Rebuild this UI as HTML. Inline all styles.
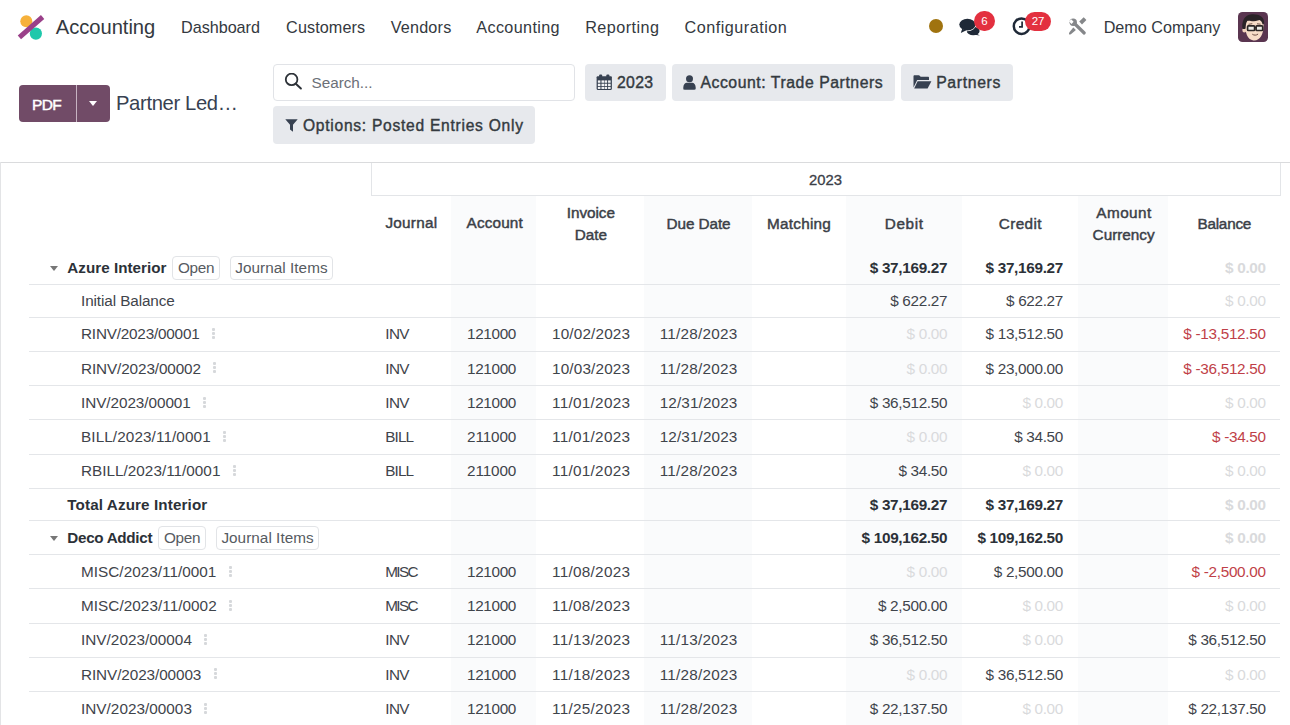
<!DOCTYPE html>
<html><head><meta charset="utf-8"><title>Partner Ledger</title>
<style>
html,body{margin:0;padding:0;background:#fff;}
body{width:1290px;height:725px;overflow:hidden;position:relative;font-family:'Liberation Sans', sans-serif;}
.t{position:absolute;white-space:nowrap;}
.r{position:absolute;}
.bl{display:inline-block;width:0;height:0;vertical-align:baseline;}
</style></head><body>
<svg class="r" style="left:14px;top:12px" width="34" height="32" viewBox="0 0 34 32">
<circle cx="12.3" cy="9.3" r="6" fill="#f6b13b"/>
<circle cx="21.9" cy="21.6" r="6.1" fill="#1ec8ab"/>
<line x1="5.4" y1="25.3" x2="28.6" y2="5" stroke="#9a4089" stroke-width="5" stroke-linecap="butt"/>
</svg>
<div class="t" style="top:16.81px;font-size:20.2px;line-height:20.2px;font-weight:400;color:#343940;letter-spacing:-0.049px;left:55.80px;">Accounting</div>
<div class="t" style="top:18.91px;font-size:16.2px;line-height:16.2px;font-weight:400;color:#343940;letter-spacing:-0.031px;left:181.00px;">Dashboard</div>
<div class="t" style="top:18.91px;font-size:16.2px;line-height:16.2px;font-weight:400;color:#343940;letter-spacing:0.098px;left:286.10px;">Customers</div>
<div class="t" style="top:18.91px;font-size:16.2px;line-height:16.2px;font-weight:400;color:#343940;letter-spacing:0.193px;left:390.70px;">Vendors</div>
<div class="t" style="top:18.91px;font-size:16.2px;line-height:16.2px;font-weight:400;color:#343940;letter-spacing:0.350px;left:476.30px;">Accounting</div>
<div class="t" style="top:18.91px;font-size:16.2px;line-height:16.2px;font-weight:400;color:#343940;letter-spacing:0.445px;left:585.20px;">Reporting</div>
<div class="t" style="top:18.91px;font-size:16.2px;line-height:16.2px;font-weight:400;color:#343940;letter-spacing:0.487px;left:684.60px;">Configuration</div>
<div class="r" style="left:929px;top:19.3px;width:14px;height:14px;border-radius:50%;background:#a0730f;"></div>
<svg class="r" style="left:958px;top:17px" width="24" height="20" viewBox="0 0 24 20">
<ellipse cx="15.2" cy="14" rx="6.4" ry="4.3" fill="#1f2937"/>
<path d="M18.5 16.5L21.8 18.6L16.5 17.8Z" fill="#1f2937"/>
<ellipse cx="9.4" cy="7.6" rx="8.1" ry="5.9" fill="#1f2937" stroke="#fff" stroke-width="1.3" paint-order="stroke"/>
<path d="M4.2 11.8L2.8 15.9L8.4 13.2Z" fill="#1f2937"/>
</svg>
<div class="r" style="left:974.2px;top:11.3px;width:20.4px;height:19.8px;border-radius:10px;background:#e3303f;"></div>
<div class="t" style="top:16.30px;font-size:11.5px;line-height:11.5px;font-weight:400;color:#fff;left:684.40px;width:600px;text-align:center;">6</div>
<svg class="r" style="left:1012px;top:16px" width="20" height="21" viewBox="0 0 20 21">
<circle cx="9.6" cy="10.2" r="7.8" fill="none" stroke="#1f2937" stroke-width="2.5"/>
<path d="M10.1 5.6V10.8H7" fill="none" stroke="#1f2937" stroke-width="1.7"/>
</svg>
<div class="r" style="left:1025.2px;top:11.5px;width:25.8px;height:19.5px;border-radius:10px;background:#e3303f;"></div>
<div class="t" style="top:16.30px;font-size:11.5px;line-height:11.5px;font-weight:400;color:#fff;left:738.10px;width:600px;text-align:center;">27</div>
<svg class="r" style="left:1064px;top:13px" width="28" height="26" viewBox="0 0 28 26">
<g fill="#85878a">
<path d="M15.2 8.6l4.5-4.4 2.7 2.7-4.4 4.5z"/>
<path d="M9.3 14.4L11.9 17L7.2 20.9Q5.6 22 5.1 21.3Q4.7 20.6 5.6 19.1Z"/>
</g>
<line x1="11" y1="11" x2="20.2" y2="20" stroke="#85878a" stroke-width="3.2" stroke-linecap="round"/>
<circle cx="9.2" cy="9.2" r="3.7" fill="#85878a"/>
<rect x="5.8" y="6.9" width="3" height="3.5" transform="rotate(-45 7.3 8.65)" fill="#fff"/>
</svg>
<div class="t" style="top:19.21px;font-size:16.2px;line-height:16.2px;font-weight:400;color:#343940;letter-spacing:-0.022px;left:1103.70px;">Demo Company</div>
<svg class="r" style="left:1238px;top:12px" width="30" height="30" viewBox="0 0 30 30">
<rect width="30" height="30" rx="4.5" fill="#5a3550"/>
<path d="M7.5 12C7 20 9 27.5 15.5 28.5 22 29 25.5 22 25.6 14 25.7 9 22 7 16.5 7 11 7 8 8.5 7.5 12z" fill="#f7dcc8"/>
<ellipse cx="6.3" cy="18" rx="2" ry="2.6" fill="#f3d2bd"/>
<path d="M4.5 17C3.5 9.5 6 2.6 14 2.2 21 1.8 26.5 4.5 26.2 11.5L24.6 12.5C24 10 23 8.6 21.5 8 17.5 9.5 12 9.6 9.5 8.6 8.2 10.5 7.6 13.5 7.3 17z" fill="#2a2327"/>
<rect x="9.6" y="13.9" width="7" height="4.6" rx="0.8" fill="#ecebe6" stroke="#2c2626" stroke-width="1.7"/>
<rect x="18.1" y="13.9" width="6.6" height="4.6" rx="0.8" fill="#ecebe6" stroke="#2c2626" stroke-width="1.7"/>
<path d="M16.6 15.5h1.5" stroke="#2c2626" stroke-width="1.2"/>
<path d="M14.3 22.2c1.8 1.3 4 1.3 5.8-.2" stroke="#6b4a40" stroke-width="1" fill="none"/>
<path d="M10.5 12.3l3.8-.6M19 11.8l3.6.4" stroke="#5b4238" stroke-width="0.9"/>
</svg>
<div class="r" style="left:19px;top:84.5px;width:56.5px;height:37px;background:#714b67;border-radius:4px 0 0 4px;"></div>
<div class="r" style="left:75.5px;top:84.5px;width:1px;height:37px;background:#c7b3c2;"></div>
<div class="r" style="left:76.5px;top:84.5px;width:33.5px;height:37px;background:#714b67;border-radius:0 4px 4px 0;"></div>
<div class="t" style="top:96.60px;font-size:15.5px;line-height:15.5px;font-weight:400;color:#fff;letter-spacing:-0.650px;-webkit-text-stroke:0.45px #fff;left:32.00px;">PDF</div>
<div class="r" style="left:89px;top:101px;width:0;height:0;border-left:4.5px solid transparent;border-right:4.5px solid transparent;border-top:5px solid #fff;"></div>
<div class="t" style="top:93.01px;font-size:20.2px;line-height:20.2px;font-weight:400;color:#374151;letter-spacing:-0.341px;left:116.00px;">Partner Led…</div>
<div class="r" style="left:273.3px;top:64.3px;width:301.6px;height:36.8px;border:1px solid #e1e3e7;border-radius:4px;box-sizing:border-box;background:#fff;"></div>
<svg class="r" style="left:284px;top:73px" width="20" height="19" viewBox="0 0 20 19">
<circle cx="7.6" cy="6.4" r="5.8" fill="none" stroke="#2d3238" stroke-width="1.8"/>
<path d="M11.8 10.8l5.1 4.7" stroke="#2d3238" stroke-width="2" stroke-linecap="round"/>
</svg>
<div class="t" style="top:75.31px;font-size:15.3px;line-height:15.3px;font-weight:400;color:#6c7077;letter-spacing:-0.028px;left:311.50px;">Search...</div>
<div class="r" style="left:584.8px;top:64.3px;width:81px;height:36.3px;background:#e7e9ed;border-radius:4px;"></div>
<div class="r" style="left:671.5px;top:64.3px;width:223.7px;height:36.3px;background:#e7e9ed;border-radius:4px;"></div>
<div class="r" style="left:900.5px;top:64.3px;width:112.5px;height:36.3px;background:#e7e9ed;border-radius:4px;"></div>
<div class="r" style="left:273.3px;top:106.1px;width:261.7px;height:37.6px;background:#e7e9ed;border-radius:4px;"></div>
<svg class="r" style="left:596px;top:74px" width="16.5" height="16.5" viewBox="0 0 16 16">
<rect x="0.6" y="2.2" width="14.8" height="13.2" rx="1" fill="#374151"/>
<rect x="3" y="0.5" width="3" height="4" rx="1" fill="#374151"/>
<rect x="10" y="0.5" width="3" height="4" rx="1" fill="#374151"/>
<g fill="#f3f4f6">
<rect x="1.8" y="6.2" width="2.5" height="2.3"/><rect x="5.3" y="6.2" width="2.5" height="2.3"/><rect x="8.3" y="6.2" width="2.5" height="2.3"/><rect x="11.7" y="6.2" width="2.5" height="2.3"/>
<rect x="1.8" y="9.4" width="2.5" height="2.3"/><rect x="5.3" y="9.4" width="2.5" height="2.3"/><rect x="8.3" y="9.4" width="2.5" height="2.3"/><rect x="11.7" y="9.4" width="2.5" height="2.3"/>
<rect x="1.8" y="12.5" width="2.5" height="2"/><rect x="5.3" y="12.5" width="2.5" height="2"/><rect x="8.3" y="12.5" width="2.5" height="2"/><rect x="11.7" y="12.5" width="2.5" height="2"/>
</g></svg>
<div class="t" style="top:74.91px;font-size:15.8px;line-height:15.8px;font-weight:400;color:#343a40;letter-spacing:0.285px;-webkit-text-stroke:0.4px #343a40;left:617.00px;">2023</div>
<svg class="r" style="left:683px;top:74.5px" width="13" height="15" viewBox="0 0 13 15">
<circle cx="6.5" cy="3.8" r="3.5" fill="#374151"/>
<path d="M0.3 12.5c0-3.2 1.8-4.8 3.5-4.8h5.4c1.7 0 3.5 1.6 3.5 4.8v1c0 .8-.6 1.2-1.2 1.2H1.5c-.6 0-1.2-.4-1.2-1.2z" fill="#374151"/>
</svg>
<div class="t" style="top:74.91px;font-size:15.8px;line-height:15.8px;font-weight:400;color:#343a40;letter-spacing:0.543px;-webkit-text-stroke:0.4px #343a40;left:700.40px;">Account: Trade Partners</div>
<svg class="r" style="left:912.5px;top:74.5px" width="19" height="14" viewBox="0 0 19 14">
<path d="M0.5 1.2C0.5 .6 1 .2 1.5 .2h4.6l1.6 1.6h7.3c.6 0 1 .4 1 1V5H4.2L0.5 12.5z" fill="#374151"/>
<path d="M4.6 6.2h13.8L14.6 13.5H1.2z" fill="#374151"/>
</svg>
<div class="t" style="top:74.91px;font-size:15.8px;line-height:15.8px;font-weight:400;color:#343a40;letter-spacing:0.642px;-webkit-text-stroke:0.4px #343a40;left:936.20px;">Partners</div>
<svg class="r" style="left:285.3px;top:119px" width="13" height="13" viewBox="0 0 13 13">
<path d="M0.3 0.3h12.4L8 5.8v7L5 10.6V5.8z" fill="#374151"/>
</svg>
<div class="t" style="top:117.50px;font-size:15.6px;line-height:15.6px;font-weight:400;color:#343a40;letter-spacing:0.730px;-webkit-text-stroke:0.4px #343a40;left:303.00px;">Options: Posted Entries Only</div>
<div class="r" style="left:451px;top:196px;width:85px;height:529px;background:#fafbfc;"></div>
<div class="r" style="left:644px;top:196px;width:108px;height:529px;background:#fafbfc;"></div>
<div class="r" style="left:846px;top:196px;width:116px;height:529px;background:#fafbfc;"></div>
<div class="r" style="left:1078px;top:196px;width:90px;height:529px;background:#fafbfc;"></div>
<div class="r" style="left:0px;top:162px;width:1290px;height:1px;background:#dadbdd;"></div>
<div class="r" style="left:0px;top:162px;width:1px;height:563px;background:#e3e4e6;"></div>
<div class="r" style="left:371px;top:163px;width:910px;height:32.5px;border:1px solid #e3e5e8;border-top:none;box-sizing:border-box;background:#fff;"></div>
<div class="t" style="top:173.10px;font-size:14.8px;line-height:14.8px;font-weight:400;color:#3b4047;letter-spacing:-0.007px;-webkit-text-stroke:0.3px #3b4047;left:525.50px;width:600px;text-align:center;">2023</div>
<div class="t" style="top:215.41px;font-size:15.3px;line-height:15.3px;font-weight:400;color:#3b4047;letter-spacing:0.271px;-webkit-text-stroke:0.45px #3b4047;left:385.40px;">Journal</div>
<div class="t" style="top:215.41px;font-size:15.3px;line-height:15.3px;font-weight:400;color:#3b4047;letter-spacing:0.153px;-webkit-text-stroke:0.45px #3b4047;left:466.60px;">Account</div>
<div class="t" style="top:204.81px;font-size:15.3px;line-height:15.3px;font-weight:400;color:#3b4047;letter-spacing:-0.062px;-webkit-text-stroke:0.45px #3b4047;left:290.87px;width:600px;text-align:center;">Invoice</div>
<div class="t" style="top:227.21px;font-size:15.3px;line-height:15.3px;font-weight:400;color:#3b4047;letter-spacing:-0.005px;-webkit-text-stroke:0.45px #3b4047;left:290.90px;width:600px;text-align:center;">Date</div>
<div class="t" style="top:216.01px;font-size:15.3px;line-height:15.3px;font-weight:400;color:#3b4047;letter-spacing:-0.090px;-webkit-text-stroke:0.45px #3b4047;left:398.55px;width:600px;text-align:center;">Due Date</div>
<div class="t" style="top:216.01px;font-size:15.3px;line-height:15.3px;font-weight:400;color:#3b4047;letter-spacing:0.246px;-webkit-text-stroke:0.45px #3b4047;left:767.00px;">Matching</div>
<div class="t" style="top:215.60px;font-size:15.3px;line-height:15.3px;font-weight:400;color:#3b4047;letter-spacing:0.646px;-webkit-text-stroke:0.45px #3b4047;left:604.22px;width:600px;text-align:center;">Debit</div>
<div class="t" style="top:215.60px;font-size:15.3px;line-height:15.3px;font-weight:400;color:#3b4047;letter-spacing:0.378px;-webkit-text-stroke:0.45px #3b4047;left:720.39px;width:600px;text-align:center;">Credit</div>
<div class="t" style="top:204.51px;font-size:15.3px;line-height:15.3px;font-weight:400;color:#3b4047;letter-spacing:0.475px;-webkit-text-stroke:0.45px #3b4047;left:824.04px;width:600px;text-align:center;">Amount</div>
<div class="t" style="top:227.41px;font-size:15.3px;line-height:15.3px;font-weight:400;color:#3b4047;letter-spacing:-0.009px;-webkit-text-stroke:0.45px #3b4047;left:823.60px;width:600px;text-align:center;">Currency</div>
<div class="t" style="top:216.10px;font-size:15.3px;line-height:15.3px;font-weight:400;color:#3b4047;letter-spacing:-0.215px;-webkit-text-stroke:0.45px #3b4047;left:924.29px;width:600px;text-align:center;">Balance</div>
<div class="r" style="left:29px;top:283.8px;width:1251px;height:1px;background:#e4e6e9;"></div>
<div class="r" style="left:50.3px;top:265.8px;width:0;height:0;border-left:4.6px solid transparent;border-right:4.6px solid transparent;border-top:5.2px solid #777;"></div>
<div class="t" style="top:259.86px;font-size:15.2px;line-height:15.2px;font-weight:700;color:#2c3138;letter-spacing:0.030px;left:67.30px;">Azure Interior</div>
<div class="r" style="left:172.3px;top:255.6px;width:47.7px;height:24px;border:1px solid #e2e4e7;border-radius:4px;box-sizing:border-box;"></div>
<div class="t" style="top:259.96px;font-size:15.3px;line-height:15.3px;font-weight:400;color:#565b61;letter-spacing:-0.308px;left:177.90px;">Open</div>
<div class="r" style="left:229.8px;top:255.6px;width:103.1px;height:24px;border:1px solid #e2e4e7;border-radius:4px;box-sizing:border-box;"></div>
<div class="t" style="top:259.96px;font-size:15.3px;line-height:15.3px;font-weight:400;color:#565b61;letter-spacing:0.039px;left:235.30px;">Journal Items</div>
<div class="t" style="top:259.85px;font-size:15.3px;line-height:15.3px;font-weight:700;color:#2c3138;letter-spacing:-0.307px;right:342.81px;text-align:right;">$ 37,169.27</div>
<div class="t" style="top:259.85px;font-size:15.3px;line-height:15.3px;font-weight:700;color:#2c3138;letter-spacing:-0.307px;right:227.01px;text-align:right;">$ 37,169.27</div>
<div class="t" style="top:259.85px;font-size:15.3px;line-height:15.3px;font-weight:700;color:#d9dadc;letter-spacing:-0.323px;right:24.32px;text-align:right;">$ 0.00</div>
<div class="r" style="left:29px;top:316.8px;width:1251px;height:1px;background:#e4e6e9;"></div>
<div class="t" style="top:293.01px;font-size:15.3px;line-height:15.3px;font-weight:400;color:#3f444b;letter-spacing:-0.104px;left:81.00px;">Initial Balance</div>
<div class="t" style="top:293.01px;font-size:15.3px;line-height:15.3px;font-weight:400;color:#3f444b;letter-spacing:-0.323px;right:342.82px;text-align:right;">$ 622.27</div>
<div class="t" style="top:293.01px;font-size:15.3px;line-height:15.3px;font-weight:400;color:#3f444b;letter-spacing:-0.323px;right:227.02px;text-align:right;">$ 622.27</div>
<div class="t" style="top:293.01px;font-size:15.3px;line-height:15.3px;font-weight:400;color:#d9dadc;letter-spacing:-0.323px;right:24.32px;text-align:right;">$ 0.00</div>
<div class="r" style="left:29px;top:350.7px;width:1251px;height:1px;background:#e4e6e9;"></div>
<div class="t" style="top:326.46px;font-size:15.3px;line-height:15.3px;font-weight:400;color:#3f444b;letter-spacing:-0.209px;left:81.00px;">RINV/2023/00001</div>
<div class="r" style="left:212px;top:328px;width:3.4px;height:3.4px;border-radius:1px;background:#d6d8db;"></div>
<div class="r" style="left:212px;top:332px;width:3.4px;height:3.4px;border-radius:1px;background:#d6d8db;"></div>
<div class="r" style="left:212px;top:336px;width:3.4px;height:3.4px;border-radius:1px;background:#d6d8db;"></div>
<div class="t" style="top:326.46px;font-size:15.3px;line-height:15.3px;font-weight:400;color:#3f444b;letter-spacing:-0.653px;left:385.30px;">INV</div>
<div class="t" style="top:326.46px;font-size:15.3px;line-height:15.3px;font-weight:400;color:#3f444b;letter-spacing:-0.350px;left:467.00px;">121000</div>
<div class="t" style="top:326.46px;font-size:15.3px;line-height:15.3px;font-weight:400;color:#3f444b;letter-spacing:0.159px;left:291.08px;width:600px;text-align:center;">10/02/2023</div>
<div class="t" style="top:326.46px;font-size:15.3px;line-height:15.3px;font-weight:400;color:#3f444b;letter-spacing:0.252px;left:398.63px;width:600px;text-align:center;">11/28/2023</div>
<div class="t" style="top:326.46px;font-size:15.3px;line-height:15.3px;font-weight:400;color:#d9dadc;letter-spacing:-0.323px;right:342.82px;text-align:right;">$ 0.00</div>
<div class="t" style="top:326.46px;font-size:15.3px;line-height:15.3px;font-weight:400;color:#3f444b;letter-spacing:-0.307px;right:227.01px;text-align:right;">$ 13,512.50</div>
<div class="t" style="top:326.46px;font-size:15.3px;line-height:15.3px;font-weight:400;color:#bf3f48;letter-spacing:-0.297px;right:24.30px;text-align:right;">$ -13,512.50</div>
<div class="r" style="left:29px;top:384.9px;width:1251px;height:1px;background:#e4e6e9;"></div>
<div class="t" style="top:360.51px;font-size:15.3px;line-height:15.3px;font-weight:400;color:#3f444b;letter-spacing:-0.116px;left:81.00px;">RINV/2023/00002</div>
<div class="r" style="left:213px;top:362px;width:3.4px;height:3.4px;border-radius:1px;background:#d6d8db;"></div>
<div class="r" style="left:213px;top:366px;width:3.4px;height:3.4px;border-radius:1px;background:#d6d8db;"></div>
<div class="r" style="left:213px;top:370px;width:3.4px;height:3.4px;border-radius:1px;background:#d6d8db;"></div>
<div class="t" style="top:360.51px;font-size:15.3px;line-height:15.3px;font-weight:400;color:#3f444b;letter-spacing:-0.653px;left:385.30px;">INV</div>
<div class="t" style="top:360.51px;font-size:15.3px;line-height:15.3px;font-weight:400;color:#3f444b;letter-spacing:-0.350px;left:467.00px;">121000</div>
<div class="t" style="top:360.51px;font-size:15.3px;line-height:15.3px;font-weight:400;color:#3f444b;letter-spacing:0.159px;left:291.08px;width:600px;text-align:center;">10/03/2023</div>
<div class="t" style="top:360.51px;font-size:15.3px;line-height:15.3px;font-weight:400;color:#3f444b;letter-spacing:0.252px;left:398.63px;width:600px;text-align:center;">11/28/2023</div>
<div class="t" style="top:360.51px;font-size:15.3px;line-height:15.3px;font-weight:400;color:#d9dadc;letter-spacing:-0.323px;right:342.82px;text-align:right;">$ 0.00</div>
<div class="t" style="top:360.51px;font-size:15.3px;line-height:15.3px;font-weight:400;color:#3f444b;letter-spacing:-0.307px;right:227.01px;text-align:right;">$ 23,000.00</div>
<div class="t" style="top:360.51px;font-size:15.3px;line-height:15.3px;font-weight:400;color:#bf3f48;letter-spacing:-0.297px;right:24.30px;text-align:right;">$ -36,512.50</div>
<div class="r" style="left:29px;top:418.8px;width:1251px;height:1px;background:#e4e6e9;"></div>
<div class="t" style="top:394.56px;font-size:15.3px;line-height:15.3px;font-weight:400;color:#3f444b;letter-spacing:-0.060px;left:81.00px;">INV/2023/00001</div>
<div class="r" style="left:203px;top:397px;width:3.4px;height:3.4px;border-radius:1px;background:#d6d8db;"></div>
<div class="r" style="left:203px;top:401px;width:3.4px;height:3.4px;border-radius:1px;background:#d6d8db;"></div>
<div class="r" style="left:203px;top:405px;width:3.4px;height:3.4px;border-radius:1px;background:#d6d8db;"></div>
<div class="t" style="top:394.56px;font-size:15.3px;line-height:15.3px;font-weight:400;color:#3f444b;letter-spacing:-0.653px;left:385.30px;">INV</div>
<div class="t" style="top:394.56px;font-size:15.3px;line-height:15.3px;font-weight:400;color:#3f444b;letter-spacing:-0.350px;left:467.00px;">121000</div>
<div class="t" style="top:394.56px;font-size:15.3px;line-height:15.3px;font-weight:400;color:#3f444b;letter-spacing:0.285px;left:291.14px;width:600px;text-align:center;">11/01/2023</div>
<div class="t" style="top:394.56px;font-size:15.3px;line-height:15.3px;font-weight:400;color:#3f444b;letter-spacing:0.126px;left:398.56px;width:600px;text-align:center;">12/31/2023</div>
<div class="t" style="top:394.56px;font-size:15.3px;line-height:15.3px;font-weight:400;color:#3f444b;letter-spacing:-0.307px;right:342.81px;text-align:right;">$ 36,512.50</div>
<div class="t" style="top:394.56px;font-size:15.3px;line-height:15.3px;font-weight:400;color:#d9dadc;letter-spacing:-0.323px;right:227.02px;text-align:right;">$ 0.00</div>
<div class="t" style="top:394.56px;font-size:15.3px;line-height:15.3px;font-weight:400;color:#d9dadc;letter-spacing:-0.323px;right:24.32px;text-align:right;">$ 0.00</div>
<div class="r" style="left:29px;top:453.5px;width:1251px;height:1px;background:#e4e6e9;"></div>
<div class="t" style="top:428.85px;font-size:15.3px;line-height:15.3px;font-weight:400;color:#3f444b;letter-spacing:0.096px;left:81.00px;">BILL/2023/11/0001</div>
<div class="r" style="left:223px;top:431px;width:3.4px;height:3.4px;border-radius:1px;background:#d6d8db;"></div>
<div class="r" style="left:223px;top:435px;width:3.4px;height:3.4px;border-radius:1px;background:#d6d8db;"></div>
<div class="r" style="left:223px;top:439px;width:3.4px;height:3.4px;border-radius:1px;background:#d6d8db;"></div>
<div class="t" style="top:428.85px;font-size:15.3px;line-height:15.3px;font-weight:400;color:#3f444b;letter-spacing:-0.891px;left:385.30px;">BILL</div>
<div class="t" style="top:428.85px;font-size:15.3px;line-height:15.3px;font-weight:400;color:#3f444b;letter-spacing:-0.123px;left:467.00px;">211000</div>
<div class="t" style="top:428.85px;font-size:15.3px;line-height:15.3px;font-weight:400;color:#3f444b;letter-spacing:0.285px;left:291.14px;width:600px;text-align:center;">11/01/2023</div>
<div class="t" style="top:428.85px;font-size:15.3px;line-height:15.3px;font-weight:400;color:#3f444b;letter-spacing:0.126px;left:398.56px;width:600px;text-align:center;">12/31/2023</div>
<div class="t" style="top:428.85px;font-size:15.3px;line-height:15.3px;font-weight:400;color:#d9dadc;letter-spacing:-0.323px;right:342.82px;text-align:right;">$ 0.00</div>
<div class="t" style="top:428.85px;font-size:15.3px;line-height:15.3px;font-weight:400;color:#3f444b;letter-spacing:-0.323px;right:227.02px;text-align:right;">$ 34.50</div>
<div class="t" style="top:428.85px;font-size:15.3px;line-height:15.3px;font-weight:400;color:#bf3f48;letter-spacing:-0.305px;right:24.30px;text-align:right;">$ -34.50</div>
<div class="r" style="left:29px;top:487.5px;width:1251px;height:1px;background:#e4e6e9;"></div>
<div class="t" style="top:463.21px;font-size:15.3px;line-height:15.3px;font-weight:400;color:#3f444b;letter-spacing:0.011px;left:81.00px;">RBILL/2023/11/0001</div>
<div class="r" style="left:233px;top:465px;width:3.4px;height:3.4px;border-radius:1px;background:#d6d8db;"></div>
<div class="r" style="left:233px;top:469px;width:3.4px;height:3.4px;border-radius:1px;background:#d6d8db;"></div>
<div class="r" style="left:233px;top:473px;width:3.4px;height:3.4px;border-radius:1px;background:#d6d8db;"></div>
<div class="t" style="top:463.21px;font-size:15.3px;line-height:15.3px;font-weight:400;color:#3f444b;letter-spacing:-0.891px;left:385.30px;">BILL</div>
<div class="t" style="top:463.21px;font-size:15.3px;line-height:15.3px;font-weight:400;color:#3f444b;letter-spacing:-0.123px;left:467.00px;">211000</div>
<div class="t" style="top:463.21px;font-size:15.3px;line-height:15.3px;font-weight:400;color:#3f444b;letter-spacing:0.285px;left:291.14px;width:600px;text-align:center;">11/01/2023</div>
<div class="t" style="top:463.21px;font-size:15.3px;line-height:15.3px;font-weight:400;color:#3f444b;letter-spacing:0.252px;left:398.63px;width:600px;text-align:center;">11/28/2023</div>
<div class="t" style="top:463.21px;font-size:15.3px;line-height:15.3px;font-weight:400;color:#3f444b;letter-spacing:-0.323px;right:342.82px;text-align:right;">$ 34.50</div>
<div class="t" style="top:463.21px;font-size:15.3px;line-height:15.3px;font-weight:400;color:#d9dadc;letter-spacing:-0.323px;right:227.02px;text-align:right;">$ 0.00</div>
<div class="t" style="top:463.21px;font-size:15.3px;line-height:15.3px;font-weight:400;color:#d9dadc;letter-spacing:-0.323px;right:24.32px;text-align:right;">$ 0.00</div>
<div class="r" style="left:29px;top:520.1px;width:1251px;height:1px;background:#e4e6e9;"></div>
<div class="t" style="top:496.51px;font-size:15.2px;line-height:15.2px;font-weight:700;color:#2c3138;letter-spacing:0.124px;left:67.30px;">Total Azure Interior</div>
<div class="t" style="top:496.51px;font-size:15.3px;line-height:15.3px;font-weight:700;color:#2c3138;letter-spacing:-0.307px;right:342.81px;text-align:right;">$ 37,169.27</div>
<div class="t" style="top:496.51px;font-size:15.3px;line-height:15.3px;font-weight:700;color:#2c3138;letter-spacing:-0.307px;right:227.01px;text-align:right;">$ 37,169.27</div>
<div class="t" style="top:496.51px;font-size:15.3px;line-height:15.3px;font-weight:700;color:#d9dadc;letter-spacing:-0.323px;right:24.32px;text-align:right;">$ 0.00</div>
<div class="r" style="left:29px;top:553.8px;width:1251px;height:1px;background:#e4e6e9;"></div>
<div class="r" style="left:50.3px;top:535.6px;width:0;height:0;border-left:4.6px solid transparent;border-right:4.6px solid transparent;border-top:5.2px solid #777;"></div>
<div class="t" style="top:529.65px;font-size:15.2px;line-height:15.2px;font-weight:700;color:#2c3138;letter-spacing:-0.281px;left:67.30px;">Deco Addict</div>
<div class="r" style="left:158.4px;top:525.5px;width:47.7px;height:24px;border:1px solid #e2e4e7;border-radius:4px;box-sizing:border-box;"></div>
<div class="t" style="top:529.76px;font-size:15.3px;line-height:15.3px;font-weight:400;color:#565b61;letter-spacing:-0.308px;left:164.00px;">Open</div>
<div class="r" style="left:215.9px;top:525.5px;width:103.1px;height:24px;border:1px solid #e2e4e7;border-radius:4px;box-sizing:border-box;"></div>
<div class="t" style="top:529.76px;font-size:15.3px;line-height:15.3px;font-weight:400;color:#565b61;letter-spacing:0.039px;left:221.40px;">Journal Items</div>
<div class="t" style="top:529.66px;font-size:15.3px;line-height:15.3px;font-weight:700;color:#2c3138;letter-spacing:-0.309px;right:342.81px;text-align:right;">$ 109,162.50</div>
<div class="t" style="top:529.66px;font-size:15.3px;line-height:15.3px;font-weight:700;color:#2c3138;letter-spacing:-0.309px;right:227.01px;text-align:right;">$ 109,162.50</div>
<div class="t" style="top:529.66px;font-size:15.3px;line-height:15.3px;font-weight:700;color:#d9dadc;letter-spacing:-0.323px;right:24.32px;text-align:right;">$ 0.00</div>
<div class="r" style="left:29px;top:588.0px;width:1251px;height:1px;background:#e4e6e9;"></div>
<div class="t" style="top:563.60px;font-size:15.3px;line-height:15.3px;font-weight:400;color:#3f444b;letter-spacing:0.028px;left:81.00px;">MISC/2023/11/0001</div>
<div class="r" style="left:229px;top:566px;width:3.4px;height:3.4px;border-radius:1px;background:#d6d8db;"></div>
<div class="r" style="left:229px;top:570px;width:3.4px;height:3.4px;border-radius:1px;background:#d6d8db;"></div>
<div class="r" style="left:229px;top:574px;width:3.4px;height:3.4px;border-radius:1px;background:#d6d8db;"></div>
<div class="t" style="top:563.60px;font-size:15.3px;line-height:15.3px;font-weight:400;color:#3f444b;letter-spacing:-1.683px;left:385.30px;">MISC</div>
<div class="t" style="top:563.60px;font-size:15.3px;line-height:15.3px;font-weight:400;color:#3f444b;letter-spacing:-0.350px;left:467.00px;">121000</div>
<div class="t" style="top:563.60px;font-size:15.3px;line-height:15.3px;font-weight:400;color:#3f444b;letter-spacing:0.285px;left:291.14px;width:600px;text-align:center;">11/08/2023</div>
<div class="t" style="top:563.60px;font-size:15.3px;line-height:15.3px;font-weight:400;color:#d9dadc;letter-spacing:-0.323px;right:342.82px;text-align:right;">$ 0.00</div>
<div class="t" style="top:563.60px;font-size:15.3px;line-height:15.3px;font-weight:400;color:#3f444b;letter-spacing:-0.305px;right:227.01px;text-align:right;">$ 2,500.00</div>
<div class="t" style="top:563.60px;font-size:15.3px;line-height:15.3px;font-weight:400;color:#bf3f48;letter-spacing:-0.294px;right:24.29px;text-align:right;">$ -2,500.00</div>
<div class="r" style="left:29px;top:622.5px;width:1251px;height:1px;background:#e4e6e9;"></div>
<div class="t" style="top:597.96px;font-size:15.3px;line-height:15.3px;font-weight:400;color:#3f444b;letter-spacing:0.047px;left:81.00px;">MISC/2023/11/0002</div>
<div class="r" style="left:229px;top:600px;width:3.4px;height:3.4px;border-radius:1px;background:#d6d8db;"></div>
<div class="r" style="left:229px;top:604px;width:3.4px;height:3.4px;border-radius:1px;background:#d6d8db;"></div>
<div class="r" style="left:229px;top:608px;width:3.4px;height:3.4px;border-radius:1px;background:#d6d8db;"></div>
<div class="t" style="top:597.96px;font-size:15.3px;line-height:15.3px;font-weight:400;color:#3f444b;letter-spacing:-1.683px;left:385.30px;">MISC</div>
<div class="t" style="top:597.96px;font-size:15.3px;line-height:15.3px;font-weight:400;color:#3f444b;letter-spacing:-0.350px;left:467.00px;">121000</div>
<div class="t" style="top:597.96px;font-size:15.3px;line-height:15.3px;font-weight:400;color:#3f444b;letter-spacing:0.285px;left:291.14px;width:600px;text-align:center;">11/08/2023</div>
<div class="t" style="top:597.96px;font-size:15.3px;line-height:15.3px;font-weight:400;color:#3f444b;letter-spacing:-0.305px;right:342.81px;text-align:right;">$ 2,500.00</div>
<div class="t" style="top:597.96px;font-size:15.3px;line-height:15.3px;font-weight:400;color:#d9dadc;letter-spacing:-0.323px;right:227.02px;text-align:right;">$ 0.00</div>
<div class="t" style="top:597.96px;font-size:15.3px;line-height:15.3px;font-weight:400;color:#d9dadc;letter-spacing:-0.323px;right:24.32px;text-align:right;">$ 0.00</div>
<div class="r" style="left:29px;top:656.7px;width:1251px;height:1px;background:#e4e6e9;"></div>
<div class="t" style="top:632.31px;font-size:15.3px;line-height:15.3px;font-weight:400;color:#3f444b;letter-spacing:0.025px;left:81.00px;">INV/2023/00004</div>
<div class="r" style="left:204px;top:634px;width:3.4px;height:3.4px;border-radius:1px;background:#d6d8db;"></div>
<div class="r" style="left:204px;top:638px;width:3.4px;height:3.4px;border-radius:1px;background:#d6d8db;"></div>
<div class="r" style="left:204px;top:642px;width:3.4px;height:3.4px;border-radius:1px;background:#d6d8db;"></div>
<div class="t" style="top:632.31px;font-size:15.3px;line-height:15.3px;font-weight:400;color:#3f444b;letter-spacing:-0.653px;left:385.30px;">INV</div>
<div class="t" style="top:632.31px;font-size:15.3px;line-height:15.3px;font-weight:400;color:#3f444b;letter-spacing:-0.350px;left:467.00px;">121000</div>
<div class="t" style="top:632.31px;font-size:15.3px;line-height:15.3px;font-weight:400;color:#3f444b;letter-spacing:0.285px;left:291.14px;width:600px;text-align:center;">11/13/2023</div>
<div class="t" style="top:632.31px;font-size:15.3px;line-height:15.3px;font-weight:400;color:#3f444b;letter-spacing:0.252px;left:398.63px;width:600px;text-align:center;">11/13/2023</div>
<div class="t" style="top:632.31px;font-size:15.3px;line-height:15.3px;font-weight:400;color:#3f444b;letter-spacing:-0.307px;right:342.81px;text-align:right;">$ 36,512.50</div>
<div class="t" style="top:632.31px;font-size:15.3px;line-height:15.3px;font-weight:400;color:#d9dadc;letter-spacing:-0.323px;right:227.02px;text-align:right;">$ 0.00</div>
<div class="t" style="top:632.31px;font-size:15.3px;line-height:15.3px;font-weight:400;color:#3f444b;letter-spacing:-0.307px;right:24.31px;text-align:right;">$ 36,512.50</div>
<div class="r" style="left:29px;top:690.9px;width:1251px;height:1px;background:#e4e6e9;"></div>
<div class="t" style="top:666.51px;font-size:15.3px;line-height:15.3px;font-weight:400;color:#3f444b;letter-spacing:-0.088px;left:81.00px;">RINV/2023/00003</div>
<div class="r" style="left:214px;top:668px;width:3.4px;height:3.4px;border-radius:1px;background:#d6d8db;"></div>
<div class="r" style="left:214px;top:672px;width:3.4px;height:3.4px;border-radius:1px;background:#d6d8db;"></div>
<div class="r" style="left:214px;top:676px;width:3.4px;height:3.4px;border-radius:1px;background:#d6d8db;"></div>
<div class="t" style="top:666.51px;font-size:15.3px;line-height:15.3px;font-weight:400;color:#3f444b;letter-spacing:-0.653px;left:385.30px;">INV</div>
<div class="t" style="top:666.51px;font-size:15.3px;line-height:15.3px;font-weight:400;color:#3f444b;letter-spacing:-0.350px;left:467.00px;">121000</div>
<div class="t" style="top:666.51px;font-size:15.3px;line-height:15.3px;font-weight:400;color:#3f444b;letter-spacing:0.285px;left:291.14px;width:600px;text-align:center;">11/18/2023</div>
<div class="t" style="top:666.51px;font-size:15.3px;line-height:15.3px;font-weight:400;color:#3f444b;letter-spacing:0.252px;left:398.63px;width:600px;text-align:center;">11/28/2023</div>
<div class="t" style="top:666.51px;font-size:15.3px;line-height:15.3px;font-weight:400;color:#d9dadc;letter-spacing:-0.323px;right:342.82px;text-align:right;">$ 0.00</div>
<div class="t" style="top:666.51px;font-size:15.3px;line-height:15.3px;font-weight:400;color:#3f444b;letter-spacing:-0.307px;right:227.01px;text-align:right;">$ 36,512.50</div>
<div class="t" style="top:666.51px;font-size:15.3px;line-height:15.3px;font-weight:400;color:#d9dadc;letter-spacing:-0.323px;right:24.32px;text-align:right;">$ 0.00</div>
<div class="t" style="top:700.71px;font-size:15.3px;line-height:15.3px;font-weight:400;color:#3f444b;letter-spacing:0.025px;left:81.00px;">INV/2023/00003</div>
<div class="r" style="left:204px;top:703px;width:3.4px;height:3.4px;border-radius:1px;background:#d6d8db;"></div>
<div class="r" style="left:204px;top:707px;width:3.4px;height:3.4px;border-radius:1px;background:#d6d8db;"></div>
<div class="r" style="left:204px;top:711px;width:3.4px;height:3.4px;border-radius:1px;background:#d6d8db;"></div>
<div class="t" style="top:700.71px;font-size:15.3px;line-height:15.3px;font-weight:400;color:#3f444b;letter-spacing:-0.653px;left:385.30px;">INV</div>
<div class="t" style="top:700.71px;font-size:15.3px;line-height:15.3px;font-weight:400;color:#3f444b;letter-spacing:-0.350px;left:467.00px;">121000</div>
<div class="t" style="top:700.71px;font-size:15.3px;line-height:15.3px;font-weight:400;color:#3f444b;letter-spacing:0.285px;left:291.14px;width:600px;text-align:center;">11/25/2023</div>
<div class="t" style="top:700.71px;font-size:15.3px;line-height:15.3px;font-weight:400;color:#3f444b;letter-spacing:0.252px;left:398.63px;width:600px;text-align:center;">11/28/2023</div>
<div class="t" style="top:700.71px;font-size:15.3px;line-height:15.3px;font-weight:400;color:#3f444b;letter-spacing:-0.307px;right:342.81px;text-align:right;">$ 22,137.50</div>
<div class="t" style="top:700.71px;font-size:15.3px;line-height:15.3px;font-weight:400;color:#d9dadc;letter-spacing:-0.323px;right:227.02px;text-align:right;">$ 0.00</div>
<div class="t" style="top:700.71px;font-size:15.3px;line-height:15.3px;font-weight:400;color:#3f444b;letter-spacing:-0.307px;right:24.31px;text-align:right;">$ 22,137.50</div>
</body></html>
